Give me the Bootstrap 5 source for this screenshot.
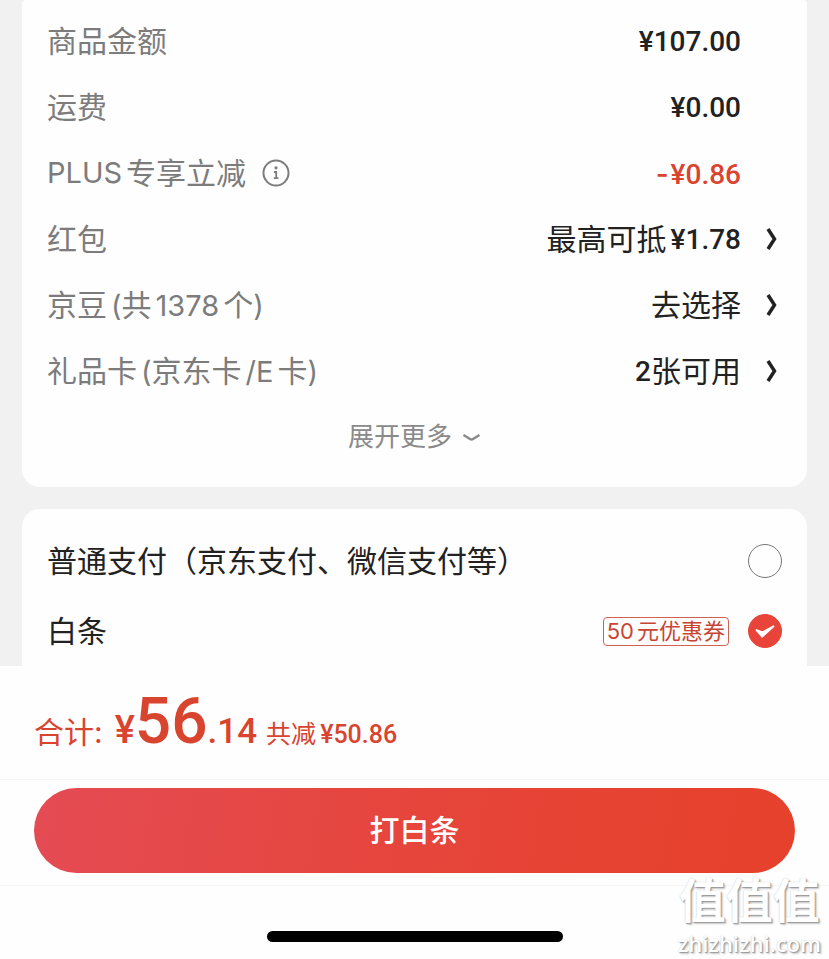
<!DOCTYPE html>
<html lang="zh-CN">
<head>
<meta charset="utf-8">
<meta name="viewport" content="width=device-width, initial-scale=1">
<title>确认订单</title>
<link href="https://cdn.jsdelivr.net/npm/bootstrap@5.3.0/dist/css/bootstrap.min.css" rel="stylesheet">
<style>
  body { font-family: Inter, "Noto Sans CJK SC", sans-serif; font-size: 30px; line-height: 40px; color: #222; background: #fefefe; }
  .page-top { background: #f1f1f1; padding: 0 22px; gap: 22px; }
  .panel { background: #fefefe; padding-left: 25px; padding-right: 25px; }
  .panel-amounts { border-radius: 4px 4px 18px 18px; padding-top: 8px; padding-bottom: 17px; }
  .panel-pay { border-radius: 18px 18px 0 0; padding-top: 17px; }
  .line-item { min-height: 66px; }
  .pay-item { min-height: 70px; }
  .item-label { color: #7c7c7c; }
  .latin { font-size: 29px; }
  .num { font-family: Roboto, sans-serif; font-weight: 500; font-size: 28px; }
  .line-item .num { padding-top: 2px; }
  .minus { font-family: Inter, sans-serif; margin-right: 2px; }
  .plain-value { margin-right: 41px; }
  .value-link { color: #222; }
  .arrow-box { width: 41px; padding-left: 25px; }
  .info-btn, .more-btn { background: none; border: 0; padding: 0; line-height: 40px; }
  .info-btn { margin-left: 16px; color: #7c7c7c; }
  .more-btn { min-height: 66px; font-size: 26px; color: #8a8a8a; gap: 10px; }
  .red { color: #d9442f; }
  .coupon { font-size: 22px; line-height: 27px; border: 1px solid #d0604f; border-radius: 4px; padding: 0 3px; margin-right: 19px; color: #c84534; }
  .coupon-sum { margin-right: 3px; }
  .form-check-input.pay-radio { width: 34px; height: 34px; margin: 0; border: 1px solid #777; background-color: #fefefe; }
  .form-check-input.pay-radio:checked { border-color: #e8443a; background-color: #e8443a; background-size: 100% 100%;
    background-image: url("data:image/svg+xml,%3Csvg xmlns='http://www.w3.org/2000/svg' viewBox='0 0 34 34'%3E%3Cpath d='M8 16 L14 23 L26 12 L14.500 18.500 Z' fill='%23fff' stroke='%23fff' stroke-width='2' stroke-linejoin='round'/%3E%3C/svg%3E"); }
  .total-bar { padding: 28px 34px 16px; line-height: 56px; }
  .total-label { margin-right: 12px; }
  .yen-big { font-size: 38px; }
  .cents { font-size: 35px; }
  .whole { font-size: 64px; }
  .saved { font-size: 25px; margin-left: 9px; }
  .saved .num { font-size: 25px; margin-left: 4px; }
  .action-bar { border-top: 1px solid #f5f5f5; border-bottom: 1px solid #f5f5f5; padding: 8px 34px 12px; }
  .btn.pay-btn { min-height: 85px; border: 0; font-size: 30px; font-weight: 500; color: #fff; background: linear-gradient(100deg, #e44b53, #e64437 60%, #e6412b); }
  .home-zone { padding: 45px 0 18px; }
  .home-line { width: 296px; height: 11px; background: #000; }
  .site-mark { right: 8px; bottom: 2px; color: #fff; text-shadow: 1px 1px 1px #999, 0 0 1px #bbb, 2px 2px 2px #ccc; }
  .mark-cn { font-size: 47px; line-height: 54px; font-weight: 700; }
  .mark-url { font-family: "Open Sans", sans-serif; font-size: 22px; line-height: 30px; font-weight: 600; }
</style>
<script src="https://cdn.jsdelivr.net/npm/bootstrap@5.3.0/dist/js/bootstrap.bundle.min.js"></script>
</head>
<body>
<div class="position-relative d-flex flex-column min-vh-100">
  <main class="page-top d-flex flex-column">
    <section class="panel panel-amounts">
      <div class="line-item d-flex align-items-center justify-content-between">
        <span class="item-label">商品金额</span><span class="num plain-value">¥107.00</span>
      </div>
      <div class="line-item d-flex align-items-center justify-content-between">
        <span class="item-label">运费</span><span class="num plain-value">¥0.00</span>
      </div>
      <div class="line-item d-flex align-items-center justify-content-between">
        <span class="item-label d-flex align-items-center"><span class="latin me-1">PLUS</span>专享立减
          <button type="button" class="info-btn d-flex" aria-label="说明">
            <svg width="28" height="28" viewBox="0 0 28 28" fill="none" stroke="currentColor"><circle cx="14" cy="14" r="12.500" stroke-width="2"/><circle cx="14" cy="8.800" r="1.600" fill="currentColor" stroke="none"/><path d="M12 13h2.200v6M11.800 19.200h4.600" stroke-width="1.800"/></svg>
          </button>
        </span>
        <span class="num plain-value red"><span class="minus">-</span>¥0.86</span>
      </div>
      <div class="line-item d-flex align-items-center justify-content-between">
        <span class="item-label">红包</span>
        <a href="#" class="value-link text-decoration-none d-flex align-items-center">最高可抵<span class="num ms-1">¥1.78</span>
          <span class="arrow-box d-flex"><svg width="12" height="22" viewBox="0 0 12 22" fill="none" stroke="currentColor" stroke-width="3.500"><path d="M2 1L8.500 11L2 21"/></svg></span></a>
      </div>
      <div class="line-item d-flex align-items-center justify-content-between">
        <span class="item-label">京豆<span class="latin ms-1">(</span>共<span class="latin mx-1">1378</span>个<span class="latin">)</span></span>
        <a href="#" class="value-link text-decoration-none d-flex align-items-center">去选择
          <span class="arrow-box d-flex"><svg width="12" height="22" viewBox="0 0 12 22" fill="none" stroke="currentColor" stroke-width="3.500"><path d="M2 1L8.500 11L2 21"/></svg></span></a>
      </div>
      <div class="line-item d-flex align-items-center justify-content-between">
        <span class="item-label">礼品卡<span class="latin ms-1">(</span>京东卡<span class="latin mx-1">/E</span>卡<span class="latin">)</span></span>
        <a href="#" class="value-link text-decoration-none d-flex align-items-center"><span class="num">2</span>张可用
          <span class="arrow-box d-flex"><svg width="12" height="22" viewBox="0 0 12 22" fill="none" stroke="currentColor" stroke-width="3.500"><path d="M2 1L8.500 11L2 21"/></svg></span></a>
      </div>
      <button type="button" class="more-btn d-flex align-items-center justify-content-center w-100">展开更多
        <svg width="19" height="9" viewBox="0 0 19 9" fill="none" stroke="currentColor" stroke-width="2.500"><path d="M1.500 2L8 6Q9.500 7 11 6L17.500 2"/></svg>
      </button>
    </section>
    <section class="panel panel-pay">
      <div class="pay-item d-flex align-items-center justify-content-between">
        <label for="pay-normal">普通支付（京东支付、微信支付等）</label>
        <input class="form-check-input pay-radio flex-shrink-0" type="radio" name="pay" id="pay-normal">
      </div>
      <div class="pay-item d-flex align-items-center">
        <label class="me-auto" for="pay-credit">白条</label>
        <span class="coupon"><span class="coupon-sum">50</span>元优惠券</span>
        <input class="form-check-input pay-radio flex-shrink-0" type="radio" name="pay" id="pay-credit" checked>
      </div>
    </section>
  </main>
  <footer>
    <div class="total-bar red d-flex align-items-baseline">
      <span class="total-label">合计:</span><span class="num yen-big">¥</span><span class="num whole">56</span><span class="num cents">.14</span>
      <span class="saved">共减<span class="num">¥50.86</span></span>
    </div>
    <div class="action-bar"><button type="button" class="btn pay-btn rounded-pill w-100">打白条</button></div>
    <div class="home-zone d-flex justify-content-center align-items-start"><div class="home-line rounded-pill"></div></div>
  </footer>
  <div class="site-mark position-absolute text-center">
    <div class="mark-cn">值值值</div>
    <div class="mark-url">zhizhizhi.com</div>
  </div>
</div>
</body>
</html>
